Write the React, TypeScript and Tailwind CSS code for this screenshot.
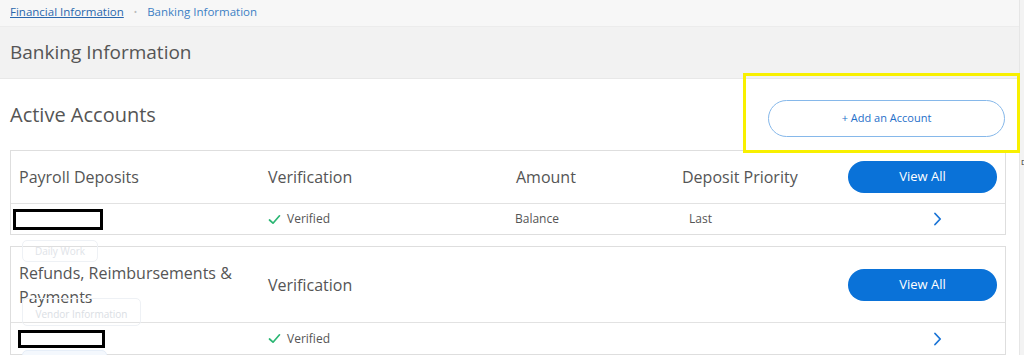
import React from "react";

const font = { fontFamily: '"Open Sans", "Noto Sans", sans-serif' };

function Check() {
  return (
    <svg width="13" height="11" viewBox="0 0 13 11" className="shrink-0">
      <path d="M1.5 6 L5 9.2 L11.5 1.8" fill="none" stroke="#2bb673" strokeWidth="1.7" strokeLinecap="round" strokeLinejoin="round" />
    </svg>
  );
}

function Chevron() {
  return (
    <svg width="9" height="14" viewBox="0 0 9 14">
      <path d="M2 1.5 L7.2 7 L2 12.5" fill="none" stroke="#1a74d6" strokeWidth="1.8" strokeLinecap="round" strokeLinejoin="round" />
    </svg>
  );
}

function ViewAll() {
  return (
    <button className="h-[32px] w-[149px] rounded-full bg-[#0a72d8] text-[13px] text-white">View All</button>
  );
}

function Redacted({ w, h }: { w: string; h: string }) {
  return <div className={`${w} ${h} border-[3px] border-black bg-white`} />;
}

export default function App() {
  return (
    <div className="relative h-[355px] w-[1024px] overflow-hidden bg-white text-[#555]" style={font}>
      <div className="flex h-full">
        <div className="flex w-[1019px] flex-col">
          {/* breadcrumb */}
          <div className="flex h-[27px] items-center gap-[10px] border-b border-[#ececec] bg-[#f7f7f7] pb-[3px] pl-[10px] text-[11.5px]">
            <span className="text-[#2a67ad] underline">Financial Information</span>
            <span className="text-[9px] text-[#bbb]">•</span>
            <span className="text-[#3c7fc4]">Banking Information</span>
          </div>
          {/* title */}
          <div className="flex h-[52px] items-center border-b border-[#e8e8e8] bg-[#f2f2f2] pl-[10px] text-[19px] text-[#555]">
            Banking Information
          </div>
          {/* active accounts */}
          <div className="flex h-[71px] items-center justify-between pl-[10px] pr-[14px]">
            <div className="text-[20px] text-[#555]">Active Accounts</div>
            <button className="mt-[7px] h-[37px] w-[237px] rounded-full border border-[#86b8ea] text-[11px] text-[#1f6fc9]">
              + Add an Account
            </button>
          </div>

          {/* card 1 */}
          <div className="ml-[10px] w-[996px] border border-[#dedede]">
            <div className="grid h-[53px] grid-cols-[249px_248px_166px_1fr] items-center border-b border-[#e2e2e2] pl-[8px] pr-[8px] text-[16px]">
              <div>Payroll Deposits</div>
              <div>Verification</div>
              <div>Amount</div>
              <div className="flex items-center justify-between">
                <span>Deposit Priority</span>
                <ViewAll />
              </div>
            </div>
            <div className="grid h-[30px] grid-cols-[254px_248px_174px_1fr] items-center pl-[2px] text-[12px]">
              <div className="pt-[1px]"><Redacted w="w-[90px]" h="h-[21px]" /></div>
              <div className="flex items-center gap-[6px] pl-[1px]"><Check /><span>Verified</span></div>
              <div>Balance</div>
              <div className="flex items-center justify-between pr-[63px]">
                <span>Last</span>
                <Chevron />
              </div>
            </div>
          </div>

          {/* card 2 */}
          <div className="ml-[10px] mt-[11px] w-[996px] border border-[#dedede]">
            <div className="grid h-[76px] grid-cols-[249px_1fr_auto] items-center border-b border-[#e2e2e2] pl-[8px] pr-[8px] text-[16px]">
              <div className="leading-[24px]">Refunds, Reimbursements &amp;<br />Payments</div>
              <div>Verification</div>
              <ViewAll />
            </div>
            <div className="grid h-[31px] grid-cols-[254px_1fr_auto] items-center pl-[2px] text-[12px]">
              <div className="pl-[5px]"><Redacted w="w-[87px]" h="h-[18px]" /></div>
              <div className="flex items-center gap-[6px] pl-[1px]"><Check /><span>Verified</span></div>
              <div className="pr-[63px]"><Chevron /></div>
            </div>
          </div>
        </div>
        <div className="flex-1 border-l border-[#e6e6e6] bg-[#f3f3f3]" />
      </div>

      {/* faint tooltip ghosts */}
      <div className="absolute left-[22px] top-[240px] flex h-[22px] w-[76px] items-center justify-center rounded-[5px] border border-[#eef1f5] text-[10px] text-[#e0e3e8]">
        Daily Work
      </div>
      <div className="absolute left-[22px] top-[298px] flex h-[28px] w-[119px] items-center justify-center rounded-[5px] border border-[#eef1f5] pt-[4px] text-[10px] text-[#dadee4]">
        Vendor Information
      </div>
      <div className="absolute left-[22px] top-[350px] h-[10px] w-[85px] rounded-[5px] border border-[#e6eef8] bg-[#f4f8fd]" />

      {/* yellow highlight annotation */}
      <div className="absolute left-[743px] top-[73px] h-[80px] w-[277px] border-[3px] border-[#f8f000]" />
      <div className="absolute left-[1021px] top-[158px] text-[8px] leading-none text-[#333]">D</div>
    </div>
  );
}
